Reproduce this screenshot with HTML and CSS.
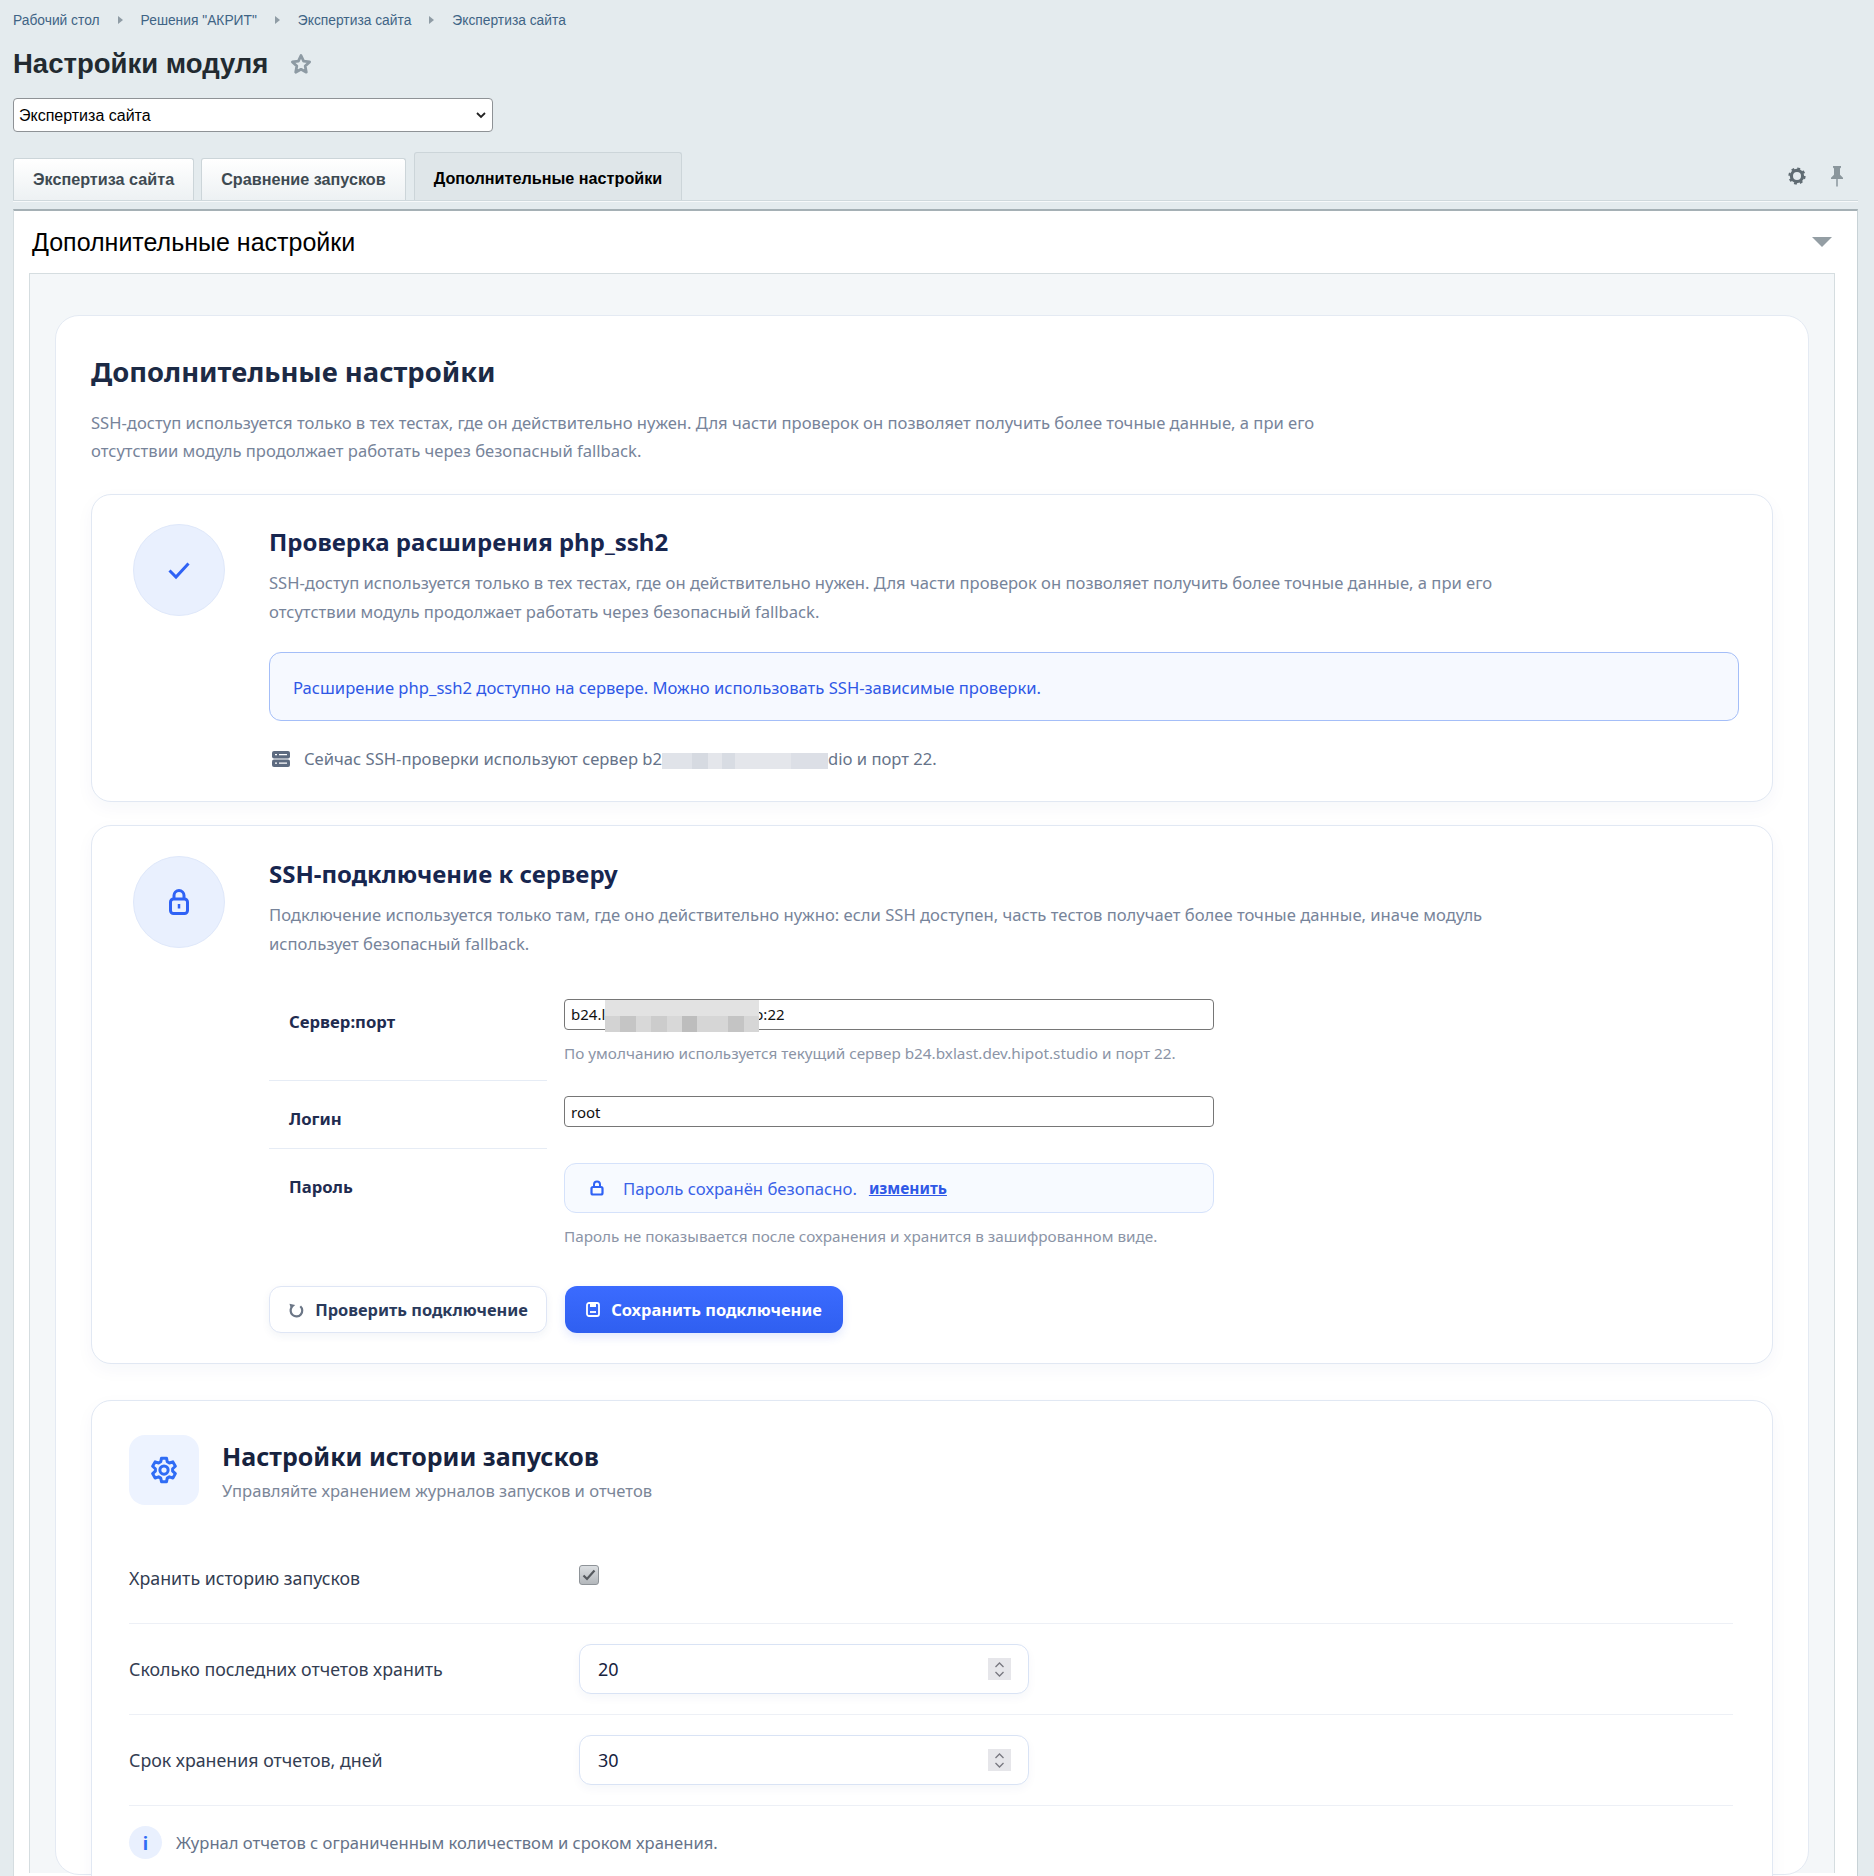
FILE: index.html
```html
<!DOCTYPE html>
<html lang="ru">
<head>
    <meta charset="UTF-8">
    <title>Настройки модуля</title>
    <link rel="stylesheet" href="styles.css">
</head>
<body>
    <div class="breadcrumbs">
        <a>Рабочий стол</a><i></i>
        <a>Решения "АКРИТ"</a><i></i>
        <a>Экспертиза сайта</a><i></i>
        <a>Экспертиза сайта</a>
    </div>
    <div class="page-title">
        <h1>Настройки модуля</h1>
        <svg class="star" width="24" height="24" viewBox="0 0 24 24"><path d="M12 3.500l2.600 5.600 6 .8-4.400 4.200 1.100 6.100L12 17.300l-5.300 2.900 1.100-6.100-4.400-4.200 6-.8z" fill="none" stroke="#8d9aa3" stroke-width="2.800" stroke-linejoin="round"/></svg>
    </div>
    <div class="select-wrap">
        <select class="module-select"><option>Экспертиза сайта</option></select>
        <svg class="select-arrow" width="10" height="7" viewBox="0 0 10 7"><path d="M1 1l4 4 4-4" fill="none" stroke="#222" stroke-width="1.800"/></svg>
    </div>

    <div class="tabs">
        <div class="tab">Экспертиза сайта</div>
        <div class="tab">Сравнение запусков</div>
        <div class="tab active">Дополнительные настройки</div>
        <div class="tab-tools">
            <svg width="20" height="20" viewBox="0 0 20 20"><circle cx="10" cy="10" r="5.600" fill="none" stroke="#5f6b72" stroke-width="3.200"/><circle cx="10" cy="10" r="7.600" fill="none" stroke="#5f6b72" stroke-width="2" stroke-dasharray="2.900 3.070"/></svg>
            <svg width="16" height="24" viewBox="0 0 16 24"><path d="M4 2h8v1.600l-1 .8v6.400l3 3V15H2v-1.200l3-3V4.400l-1-.8z" fill="#8a969c"/><path d="M8 15v7.500" stroke="#8a969c" stroke-width="1.500"/></svg>
        </div>
    </div>

    <div class="panel">
        <div class="panel-head">
            <span>Дополнительные настройки</span>
            <i class="panel-arrow"></i>
        </div>
        <div class="panel-body">
            <div class="main-card">
                <h2>Дополнительные настройки</h2>
                <p class="lead">SSH-доступ используется только в тех тестах, где он действительно нужен. Для части проверок он позволяет получить более точные данные, а при его отсутствии модуль продолжает работать через безопасный fallback.</p>

                <div class="section section-check">
                    <div class="round-icon">
                        <svg width="24" height="24" viewBox="0 0 24 24"><path d="M2.500 12.500l6.500 6.500L21.500 5.500" fill="none" stroke="#2f62f5" stroke-width="3"/></svg>
                    </div>
                    <div class="section-main">
                        <h3>Проверка расширения php_ssh2</h3>
                        <p class="section-text">SSH-доступ используется только в тех тестах, где он действительно нужен. Для части проверок он позволяет получить более точные данные, а при его отсутствии модуль продолжает работать через безопасный fallback.</p>
                        <div class="alert">Расширение php_ssh2 доступно на сервере. Можно использовать SSH-зависимые проверки.</div>
                        <div class="server-line">
                            <svg width="18" height="16" viewBox="0 0 18 16"><rect x="0" y="0" width="18" height="7.500" rx="2" fill="#5d6b80"/><rect x="0" y="8.500" width="18" height="7.500" rx="2" fill="#5d6b80"/><path d="M3 3.700h2M7 3.700h8M3 12.200h2M7 12.200h8" stroke="#fff" stroke-width="1.300"/></svg>
                            <span>Сейчас SSH-проверки используют сервер b2<span class="redact redact-light"></span>dio и порт 22.</span>
                        </div>
                    </div>
                </div>

                <div class="section section-ssh">
                    <div class="round-icon">
                        <svg width="24" height="28" viewBox="0 0 24 28"><rect x="3.500" y="11" width="17" height="14.500" rx="3" fill="none" stroke="#2f62f5" stroke-width="3"/><path d="M7 11V7.500a5 5 0 0 1 10 0V11" fill="none" stroke="#2f62f5" stroke-width="3"/><path d="M12 16v4.500" stroke="#2f62f5" stroke-width="2.500"/></svg>
                    </div>
                    <div class="section-main">
                        <h3>SSH-подключение к серверу</h3>
                        <p class="section-text">Подключение используется только там, где оно действительно нужно: если SSH доступен, часть тестов получает более точные данные, иначе модуль использует безопасный fallback.</p>
                        <div class="ssh-form">
                            <div class="form-label label-server">Сервер:порт</div>
                            <div class="form-field field-server">
                                <div class="text-input">b24.l<span class="redact redact-dark"></span>o:22</div>
                                <div class="hint">По умолчанию используется текущий сервер b24.bxlast.dev.hipot.studio и порт 22.</div>
                            </div>
                            <div class="form-label label-login">Логин</div>
                            <div class="form-field field-login">
                                <input class="text-input" type="text" value="root">
                            </div>
                            <div class="form-label label-pass">Пароль</div>
                            <div class="form-field field-pass">
                                <div class="pass-box">
                                    <svg width="14" height="16" viewBox="0 0 14 16"><rect x="1.500" y="7" width="11" height="7.500" rx="1.500" fill="none" stroke="#2f62f5" stroke-width="2.200"/><path d="M4 7V4.500a3 3 0 0 1 6 0V7" fill="none" stroke="#2f62f5" stroke-width="2"/></svg>
                                    <span>Пароль сохранён безопасно.</span>
                                    <a>изменить</a>
                                </div>
                                <div class="hint">Пароль не показывается после сохранения и хранится в зашифрованном виде.</div>
                            </div>
                        </div>
                        <div class="buttons">
                            <button class="btn btn-light">
                                <svg width="16" height="16" viewBox="0 0 16 16"><path d="M12.300 4.300a5.800 5.800 0 1 1-8.300.6" fill="none" stroke="#6b7686" stroke-width="2.200"/><path d="M1.500 1.800l5.700 1.300-4.300 4z" fill="#6b7686"/></svg>
                                Проверить подключение
                            </button>
                            <button class="btn btn-blue">
                                <svg width="14" height="15" viewBox="0 0 14 15"><rect x="1" y="1" width="12" height="13" rx="2" fill="none" stroke="#fff" stroke-width="1.800"/><path d="M4 1h6v4H4z" fill="#fff"/><path d="M4 10h6" stroke="#fff" stroke-width="1.800"/></svg>
                                Сохранить подключение
                            </button>
                        </div>
                    </div>
                </div>

                <div class="section section-history">
                    <div class="history-head">
                        <div class="square-icon">
                            <svg width="30" height="30" viewBox="0 0 24 24" fill="none" stroke="#2f6cf5" stroke-width="2.400" stroke-linejoin="round"><path d="M10 2.500h4l.6 2.900 1.700 1 2.800-.9 2 3.500-2.200 2v1.900l2.200 2-2 3.500-2.800-.9-1.700 1-.6 2.900h-4l-.6-2.900-1.700-1-2.800.9-2-3.500 2.200-2V11l-2.200-2 2-3.500 2.800.9 1.700-1z"/><circle cx="12" cy="12" r="3.300"/></svg>
                        </div>
                        <div class="history-heading">
                            <div class="history-title">Настройки истории запусков</div>
                            <div class="history-sub">Управляйте хранением журналов запусков и отчетов</div>
                        </div>
                    </div>
                    <div class="history-row row-check">
                        <label>Хранить историю запусков</label>
                        <span class="checkbox">
                            <svg width="14" height="12" viewBox="0 0 14 12"><path d="M1.500 6.500l3.500 3.500 7.500-8.500" fill="none" stroke="#55595e" stroke-width="2.200"/></svg>
                        </span>
                    </div>
                    <div class="history-row">
                        <label>Сколько последних отчетов хранить</label>
                        <div class="number-input">
                            <span>20</span>
                            <span class="spin"><svg width="11" height="17" viewBox="0 0 11 17"><path d="M1.500 6l4-4 4 4M1.500 11l4 4 4-4" fill="none" stroke="#77777f" stroke-width="1.300"/></svg></span>
                        </div>
                    </div>
                    <div class="history-row">
                        <label>Срок хранения отчетов, дней</label>
                        <div class="number-input">
                            <span>30</span>
                            <span class="spin"><svg width="11" height="17" viewBox="0 0 11 17"><path d="M1.500 6l4-4 4 4M1.500 11l4 4 4-4" fill="none" stroke="#77777f" stroke-width="1.300"/></svg></span>
                        </div>
                    </div>
                    <div class="history-note">
                        <i class="info-dot">i</i>
                        <span>Журнал отчетов с ограниченным количеством и сроком хранения.</span>
                    </div>
                </div>
            </div>
        </div>
    </div>
</body>
</html>
```

FILE: styles.css
```css
* {
    box-sizing: border-box;
}

html, body {
    height: 100%;
    overflow: hidden;
}

body {
    margin: 0;
    padding: 0 16px 0 13px;
    background: #e4ebee;
    font-family: 'Noto Sans', sans-serif;
    color: #1b2a4e;
}

/* шапка страницы */
.breadcrumbs {
    display: flex;
    align-items: center;
    height: 40px;
    font: 13.800px 'Liberation Sans', sans-serif;
    color: #3f6485;
}

.breadcrumbs i {
    width: 0;
    height: 0;
    margin: 0 18px;
    border-left: 5px solid #8f9ca5;
    border-top: 4px solid transparent;
    border-bottom: 4px solid transparent;
}

.page-title {
    display: flex;
    align-items: center;
    height: 48px;
    margin-bottom: 10px;
}

.page-title h1 {
    margin: 0;
    font: bold 27.500px 'Liberation Sans', sans-serif;
    color: #222a30;
}

.star {
    margin-left: 21px;
}

.select-wrap {
    position: relative;
    width: 480px;
}

.module-select {
    display: block;
    width: 100%;
    height: 34px;
    padding: 0 5px;
    border: 1px solid #8e9296;
    border-radius: 4px;
    background: #fff;
    font: 16px 'Liberation Sans', sans-serif;
    color: #000;
    appearance: none;
}

.select-arrow {
    position: absolute;
    top: 14px;
    right: 7px;
}

.tabs {
    display: flex;
    align-items: flex-end;
    gap: 7px;
    height: 69px;
    padding-top: 20px;
    border-bottom: 1px solid #cfd8dc;
    box-shadow: 0 1px 0 #f7f9fa;
}

.tab {
    display: flex;
    align-items: center;
    height: 42px;
    padding: 0 19px;
    border: 1px solid #ccd5d9;
    border-bottom: 0;
    border-radius: 3px 3px 0 0;
    background: linear-gradient(#fff, #edf1f3);
    font: bold 16.200px 'Liberation Sans', sans-serif;
    color: #3e4a52;
}

.tab.active {
    height: 48px;
    margin-left: 1px;
    padding-top: 4px;
    background: #dfe6e9;
    color: #000;
}

.tab-tools {
    display: flex;
    align-items: center;
    gap: 22px;
    margin-left: auto;
    padding: 0 13px 12px 0;
}

/* панель */
.panel {
    margin-top: 8px;
    border-top: 2px solid #a5b0b5;
    border-left: 1px solid #d5dde0;
    border-right: 1px solid #c8d2d6;
    background: #fff;
    padding: 0 22px 0 15px;
    height: 1700px;
}

.panel-head {
    display: flex;
    align-items: center;
    justify-content: space-between;
    height: 62px;
    padding-left: 3px;
    font: 25px 'Liberation Sans', sans-serif;
    color: #000;
}

.panel-arrow {
    width: 0;
    height: 0;
    margin-right: 3px;
    border-top: 10px solid #949ea4;
    border-left: 10px solid transparent;
    border-right: 10px solid transparent;
}

.panel-body {
    padding: 41px 25px 0;
    border: 1px solid #d5dde0;
    border-width: 1px 1px 0;
    background: #f4f7f9;
    height: 1600px;
}

.main-card {
    padding: 34px 35px 0;
    border: 1px solid #e4eaf3;
    border-radius: 24px;
    background: #fff;
    height: 1560px;
}

.main-card h2 {
    margin: 0;
    font-size: 27.400px;
    line-height: 44px;
    font-weight: 700;
    color: #1c2a45;
}

.lead {
    width: 1240px;
    margin: 15px 0 0;
    font-size: 16.600px;
    line-height: 28px;
    color: #77849a;
}

/* секции */
.section {
    display: flex;
    margin-top: 23px;
    border: 1px solid #e1e8f3;
    border-radius: 20px;
    background: #fff;
    box-shadow: 0 6px 18px rgba(30, 60, 120, 0.04);
}

.section-check {
    height: 308px;
    padding: 29px 33px 0 41px;
    margin-top: 29px;
}

.section-ssh {
    height: 539px;
    padding: 30px 33px 0 41px;
}

.section-history {
    display: block;
    margin-top: 36px;
    height: 500px;
    padding: 34px 39px 0 37px;
}

.round-icon {
    display: flex;
    align-items: center;
    justify-content: center;
    flex: none;
    width: 92px;
    height: 92px;
    border: 1px solid #dfe8fa;
    border-radius: 50%;
    background: #e9f0fe;
}

.section-main {
    flex: 1;
    margin-left: 44px;
}

.section-main h3 {
    margin: 0;
    font-size: 24px;
    line-height: 36px;
    font-weight: 700;
    color: #17264f;
}

.section-text {
    width: 1250px;
    margin: 8px 0 0;
    font-size: 16.600px;
    line-height: 29px;
    color: #77849a;
}

.alert {
    display: flex;
    align-items: center;
    height: 69px;
    margin-top: 26px;
    padding: 1px 23px 0;
    border: 1px solid #a4bef8;
    border-radius: 12px;
    background: #f6f9ff;
    font-size: 16.600px;
    color: #2f58e6;
}

.server-line {
    display: flex;
    align-items: center;
    gap: 14px;
    margin-top: 26px;
    padding-left: 3px;
    font-size: 16.600px;
    color: #667389;
}

.redact {
    display: inline-block;
    vertical-align: middle;
}

.redact-light {
    width: 166px;
    height: 16px;
    background: linear-gradient(90deg, #e0e3e9 0 18%, #d6dae1 18% 28%, #e4e6eb 28% 36%, #d8dce3 36% 44%, #e4e6eb 44% 78%, #dcdfe6 78%);
}

.redact-dark {
    position: relative;
    width: 154px;
    height: 32px;
    margin: -2px -5px -2px 0;
    background:
        linear-gradient(90deg, #d3d3d3 0 10%, #c5c5c5 10% 20%, #d8d8d8 20% 30%, #cccccc 30% 40%, #d8d8d8 40% 50%, #bdbdbd 50% 60%, #d6d6d6 60% 80%, #c4c4c4 80% 90%, #d6d6d6 90%) 0 100% / 100% 50% no-repeat,
        #e2e2e2;
}

/* форма */
.ssh-form {
    display: grid;
    grid-template-columns: 278px 650px;
    column-gap: 17px;
    margin-top: 40px;
}

.form-label {
    padding-left: 20px;
    font-size: 16.700px;
    font-weight: 700;
    color: #1f2c50;
    border-bottom: 1px solid #e6ecf5;
}

.label-server {
    height: 83px;
    padding-top: 12px;
}

.label-login {
    height: 68px;
    padding-top: 26px;
}

.label-pass {
    border-bottom: 0;
    padding-top: 26px;
}

.form-field {
    padding-top: 1px;
}

.field-login {
    padding-top: 15px;
}

.field-pass {
    padding-top: 14px;
}

.text-input {
    display: block;
    width: 100%;
    height: 31px;
    padding: 0 6px;
    border: 1px solid #767676;
    border-radius: 4px;
    background: #fff;
    font: 15px/29px 'Noto Sans', sans-serif;
    color: #111;
    white-space: nowrap;
}

.hint {
    margin-top: 13px;
    font-size: 15.300px;
    line-height: 20px;
    color: #8b94a6;
}

.pass-box {
    display: flex;
    align-items: center;
    height: 50px;
    padding: 0 25px;
    border: 1px solid #d5e2fb;
    border-radius: 12px;
    background: #f7faff;
    font-size: 16.700px;
    color: #3a62e8;
}

.pass-box span {
    margin-left: 19px;
}

.pass-box a {
    margin-left: 12px;
    font-size: 15.500px;
    font-weight: 700;
    color: #2f58e6;
    text-decoration: underline;
}

.buttons {
    display: flex;
    gap: 18px;
    margin-top: 40px;
}

.btn {
    display: flex;
    align-items: center;
    justify-content: center;
    gap: 11px;
    width: 278px;
    height: 47px;
    border-radius: 12px;
    font: 700 16.400px 'Noto Sans', sans-serif;
}

.btn-light {
    border: 1px solid #dfe6f5;
    background: #fff;
    color: #2a3a5c;
    box-shadow: 0 3px 8px rgba(30, 60, 120, 0.06);
}

.btn-blue {
    border: 0;
    background: linear-gradient(#3b6bff, #2f5ff0);
    color: #fff;
    box-shadow: 0 4px 10px rgba(47, 95, 240, 0.14);
}

/* история запусков */
.history-head {
    display: flex;
    align-items: center;
    gap: 23px;
}

.square-icon {
    display: flex;
    align-items: center;
    justify-content: center;
    width: 70px;
    height: 70px;
    border-radius: 16px;
    background: #edf3ff;
}

.history-heading {
    padding-top: 1px;
}

.history-title {
    font-size: 25px;
    line-height: 38px;
    font-weight: 700;
    color: #17233f;
}

.history-sub {
    margin-top: 3px;
    font-size: 16.600px;
    line-height: 26px;
    color: #7b8698;
}

.history-row {
    display: flex;
    align-items: center;
    height: 91px;
    border-bottom: 1px solid #edf0f6;
    font-size: 17.800px;
    color: #333d52;
}

.history-row label {
    width: 450px;
}

.row-check {
    height: 119px;
    padding-top: 27px;
}

.checkbox {
    display: flex;
    align-items: center;
    justify-content: center;
    width: 20px;
    height: 20px;
    margin-top: -5px;
    border: 1px solid #8e9398;
    border-radius: 3px;
    background: linear-gradient(#dcdfe2, #b3b7bb);
}

.number-input {
    display: flex;
    align-items: center;
    justify-content: space-between;
    width: 450px;
    height: 50px;
    padding: 0 17px 0 18px;
    border: 1px solid #d9e3f5;
    border-radius: 12px;
    background: #fff;
    box-shadow: 0 4px 10px rgba(30, 60, 120, 0.04);
    font-size: 18px;
    color: #17233f;
}

.spin {
    display: flex;
    align-items: center;
    justify-content: center;
    width: 23px;
    height: 22px;
    background: #e6e6ea;
}

.history-note {
    display: flex;
    align-items: center;
    gap: 14px;
    margin-top: 20px;
    font-size: 16.600px;
    color: #667389;
}

.info-dot {
    display: flex;
    align-items: center;
    justify-content: center;
    width: 33px;
    height: 33px;
    border-radius: 50%;
    background: #e9f0fe;
    font: 700 18px 'Noto Sans', sans-serif;
    color: #2f6cf5;
}
```
